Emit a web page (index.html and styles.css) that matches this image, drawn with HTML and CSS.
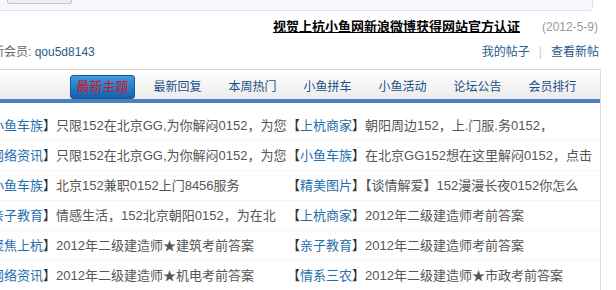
FILE: index.html
```html
<!DOCTYPE html>
<html lang="zh-CN">
<head>
  <meta charset="UTF-8" />
  <title>上杭小鱼网 - 论坛</title>
  <link rel="stylesheet" href="styles.css">
</head>
<body>

<div class="topbar"><div class="topbar-tab"></div></div>

<div class="notice">
  <a class="notice-title" href="#">视贺上杭小鱼网新浪微博获得网站官方认证</a><span class="notice-date">(2012-5-9)</span>
</div>

<div class="userbar">
  <div class="newest">最新会员: <a href="#">qou5d8143</a></div>
  <div class="links"><a href="#">我的帖子</a><span class="sep">|</span><a href="#">查看新帖</a></div>
</div>

<div class="board">
  <ul class="tabs">
    <li class="tab active">最新主题</li>
    <li class="tab">最新回复</li>
    <li class="tab">本周热门</li>
    <li class="tab">小鱼拼车</li>
    <li class="tab">小鱼活动</li>
    <li class="tab">论坛公告</li>
    <li class="tab">会员排行</li>
  </ul>

  <ul class="threads">
    <li class="row">
      <div class="cell"><span class="br">【</span><a href="#">小鱼车族</a><span class="br">】</span>只限152在北京GG,为你解闷0152，为您</div>
      <div class="cell"><span class="br">【</span><a href="#">上杭商家</a><span class="br">】</span>朝阳周边152，上.门服.务0152，</div>
    </li>
    <li class="row">
      <div class="cell"><span class="br">【</span><a href="#">网络资讯</a><span class="br">】</span>只限152在北京GG,为你解闷0152，为您</div>
      <div class="cell"><span class="br">【</span><a href="#">小鱼车族</a><span class="br">】</span>在北京GG152想在这里解闷0152，点击</div>
    </li>
    <li class="row">
      <div class="cell"><span class="br">【</span><a href="#">小鱼车族</a><span class="br">】</span>北京152兼职0152上门8456服务</div>
      <div class="cell"><span class="br">【</span><a href="#">精美图片</a><span class="br">】</span>【谈情解爱】152漫漫长夜0152你怎么</div>
    </li>
    <li class="row">
      <div class="cell"><span class="br">【</span><a href="#">亲子教育</a><span class="br">】</span>情感生活，152北京朝阳0152，为在北</div>
      <div class="cell"><span class="br">【</span><a href="#">上杭商家</a><span class="br">】</span>2012年二级建造师考前答案</div>
    </li>
    <li class="row">
      <div class="cell"><span class="br">【</span><a href="#">聚焦上杭</a><span class="br">】</span>2012年二级建造师★建筑考前答案</div>
      <div class="cell"><span class="br">【</span><a href="#">亲子教育</a><span class="br">】</span>2012年二级建造师考前答案</div>
    </li>
    <li class="row">
      <div class="cell"><span class="br">【</span><a href="#">网络资讯</a><span class="br">】</span>2012年二级建造师★机电考前答案</div>
      <div class="cell"><span class="br">【</span><a href="#">情系三农</a><span class="br">】</span>2012年二级建造师★市政考前答案</div>
    </li>
  </ul>
</div>

</body>
</html>
```

FILE: styles.css
```css
* { box-sizing: border-box; margin: 0; padding: 0; }
body {
  font-family: "Liberation Sans", "Noto Sans CJK SC", sans-serif;
  font-size: 12px;
  color: #333;
  background: #fff;
  overflow: hidden;
}

a { text-decoration: none; }
ul { list-style: none; }

/* top panel edge */
.topbar {
  width: 603px;
  margin-left: -10px;
  height: 11px;
  background: #f5f7fa;
  border-right: 1px solid #dfe3e8;
  border-bottom: 1px solid #dfe3e8;
  border-bottom-right-radius: 4px;
}

.topbar-tab {
  margin-left: 17px;
  width: 65px;
  height: 4px;
  background: #eceff3;
  border: 1px solid #c3c8cf;
  border-top: none;
  border-radius: 0 0 3px 3px;
}

/* notice line */
.notice {
  padding: 7px 18px 0 0;
  line-height: 18px;
  text-align: right;
}

.notice-title {
  color: #000;
  font-size: 13px;
  font-weight: bold;
  text-decoration: underline;
}

.notice-date {
  margin-left: 22px;
  color: #999;
}

.userbar {
  display: flex;
  justify-content: space-between;
  margin-left: -20px;
  padding: 7px 17px 0 0;
  line-height: 18px;
  color: #666;
}

.userbar a { color: #2b5a8c; }

.sep {
  margin: 0 9px;
  color: #ccc;
}

/* board */
.board {
  margin-top: 8px;
  margin-left: -40px;
  width: 641px;
  border-right: 1px solid #dcdcdc;
}

.tabs {
  display: flex;
  gap: 10px;
  padding: 5px 0 0 110px;
  height: 34px;
  border-top: 1px solid #d9d9d9;
  border-bottom: 4px solid #4b80bd;
  background: linear-gradient(#fff, #ebebeb);
}

.tab {
  width: 65px;
  height: 24px;
  line-height: 24px;
  text-align: center;
  font-size: 12px;
  color: #1a4f85;
}

.tab.active {
  color: #d4121e;
  font-size: 13px;
  background: linear-gradient(#3d9be0, #1560aa);
  border: 1px solid #1b5894;
  border-radius: 3px;
  line-height: 22px;
}

.threads {
  padding: 8px 0 0 18px;
}

.row {
  display: flex;
  height: 30px;
  border-bottom: 1px dotted #eeeeee;
}

.cell {
  width: 309px;
  line-height: 29px;
  font-size: 13px;
  color: #555;
  white-space: nowrap;
  overflow: hidden;
}

.cell a { color: #1f6fae; }
.cell .br { color: #333; }
```
